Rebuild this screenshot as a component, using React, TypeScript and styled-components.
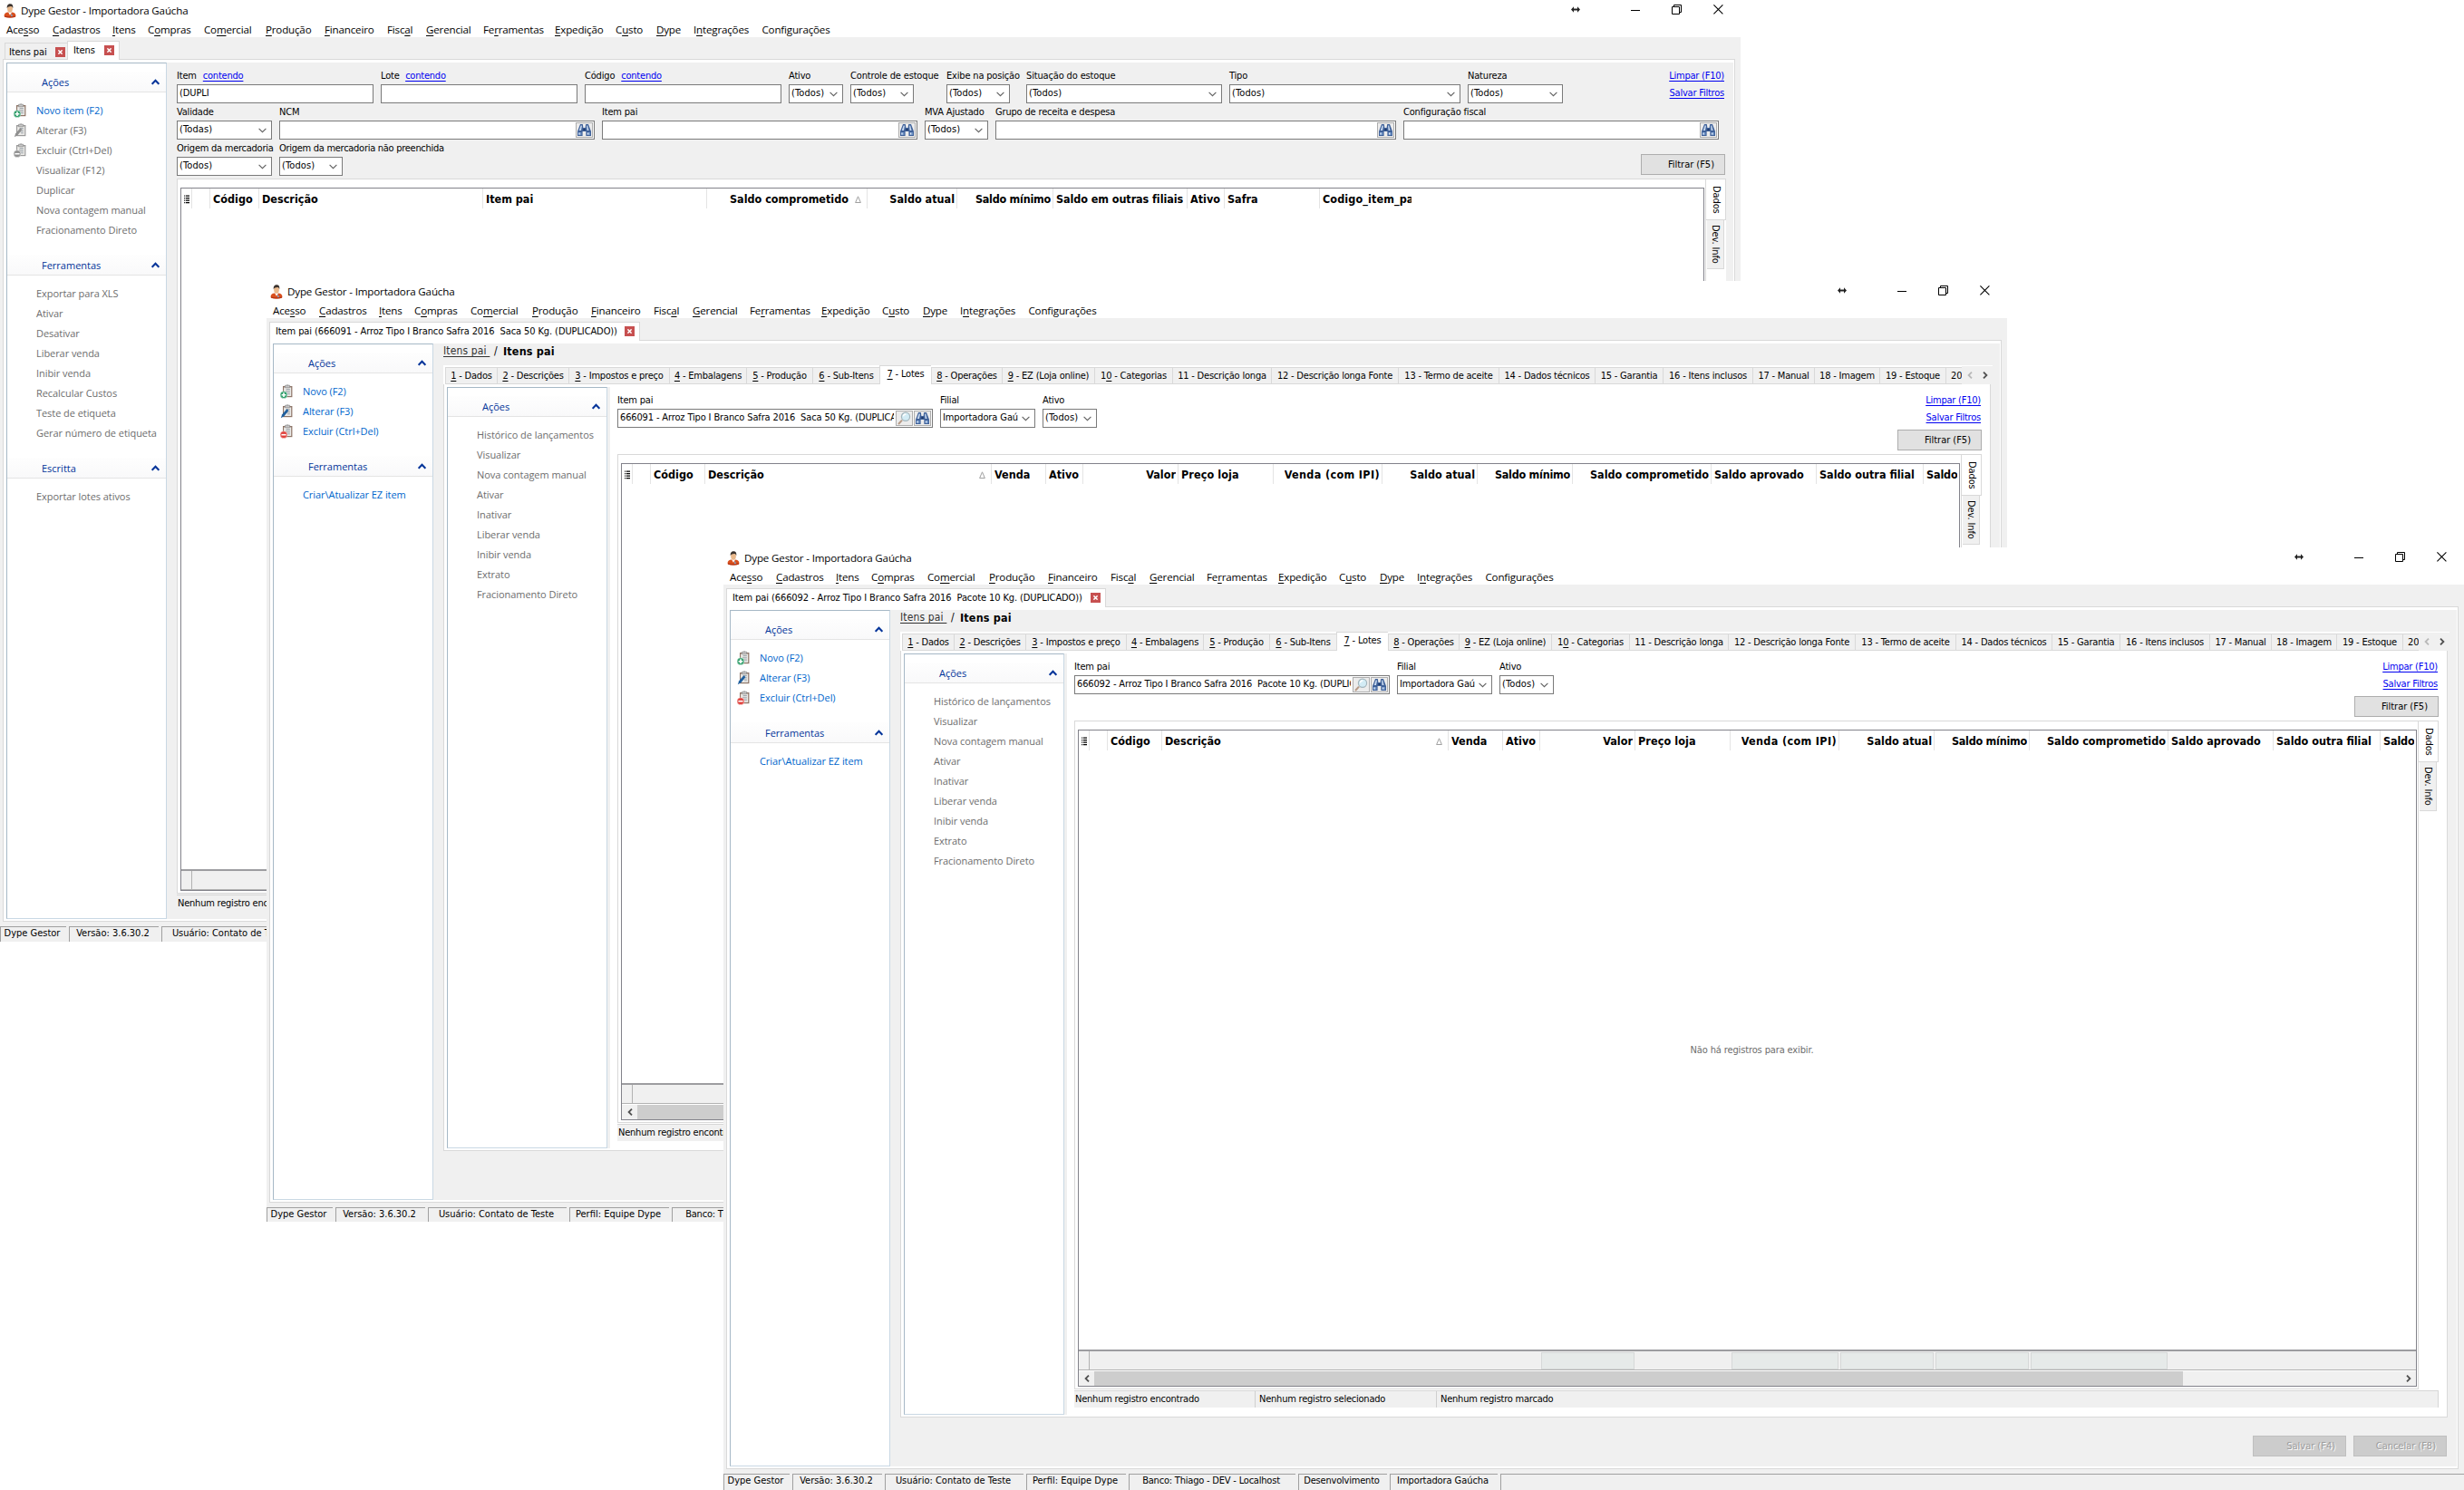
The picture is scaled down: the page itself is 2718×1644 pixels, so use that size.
import React from "react";
import styled, { createGlobalStyle, css } from "styled-components";

const TAHOMA = `"DejaVu Sans Condensed", "DejaVu Sans", sans-serif`;
const SEGOE = `"Open Sans", "Noto Sans", sans-serif`;
const FACE = "#f0f0f0";
const LINE = "#d9d9d9";

const GlobalStyle = createGlobalStyle`
  *, *::before, *::after { box-sizing: border-box; }
  html, body { margin: 0; padding: 0; background: #fff; }
  body { width: 2718px; height: 1644px; overflow: hidden; font: 11px/14px ${TAHOMA}; color: #000; }
`;

/* ---------- desktop and window frame ---------- */

const Desktop = styled.div`
  position: relative;
  width: 2718px;
  height: 1644px;
  overflow: hidden;
  background: #fff;
`;

const Frame = styled.section<{ $x: number; $y: number; $h: number }>`
  position: absolute;
  left: ${(p) => p.$x}px;
  top: ${(p) => p.$y}px;
  width: 1920px;
  height: ${(p) => p.$h}px;
  display: flex;
  flex-direction: column;
  overflow: hidden;
  background: ${FACE};
  white-space: pre;
`;

const TitleBar = styled.header`
  height: 24px;
  flex: none;
  display: flex;
  align-items: center;
  background: #fff;
  padding: 0 19px 0 4px;
  font: 11.6px/16px ${SEGOE};
  letter-spacing: -0.16px;
`;

const TitleText = styled.span`
  flex: 1;
  padding-left: 5px;
`;

const Caption = styled.div`
  display: flex;
  align-items: center;
  height: 20px;
  margin-bottom: 4px;
`;

const CaptionGlyph = styled.span<{ $gap: number }>`
  display: flex;
  width: 11px;
  margin-left: ${(p) => p.$gap}px;
`;

const MenuBar = styled.nav`
  height: 17px;
  flex: none;
  display: flex;
  align-items: center;
  background: #fff;
  padding-left: 7px;
  font: 11.6px/16px ${SEGOE};
  letter-spacing: -0.18px;
`;

const MenuEntry = styled.span<{ $w: number }>`
  width: ${(p) => p.$w}px;
`;

const Mnemonic = styled.span`
  text-decoration: underline;
  text-underline-offset: 1.5px;
  text-decoration-thickness: 1px;
  text-decoration-skip-ink: none;
`;

const DocTabs = styled.div`
  height: 24px;
  flex: none;
  display: flex;
  align-items: flex-end;
  padding-left: 3px;
`;

const DocTab = styled.div<{ $w: number; $active?: boolean }>`
  display: flex;
  align-items: center;
  width: ${(p) => p.$w}px;
  border: 1px solid ${LINE};
  border-bottom: 0;
  letter-spacing: -0.1px;
  ${(p) =>
    p.$active
      ? css`
          height: 21px;
          margin-bottom: -1px;
          padding: 0 5px 1px 6px;
          background: #fff;
          z-index: 1;
        `
      : css`
          height: 18px;
          margin-left: 2px;
          padding: 2px 2px 0 4px;
          border-right: 0;
          background: ${FACE};
        `}
`;

const CloseBox = styled.span`
  margin-left: auto;
  width: 11px;
  height: 11px;
  display: flex;
  align-items: center;
  justify-content: center;
  background: #c75050;
`;

const Page = styled.main`
  height: 952px;
  flex: none;
  display: flex;
  margin: 0 6px 0 3px;
  border: 1px solid ${LINE};
  background: #fff;
  padding: 3px 1px 2px 3px;
`;

const Content = styled.div`
  flex: 1;
  min-width: 0;
  display: flex;
  flex-direction: column;
  background: ${FACE};
`;

/* ---------- task side panel ---------- */

const Panel = styled.aside`
  width: 177px;
  flex: none;
  padding-top: 9px;
  background: #fff;
  border: 1px solid #a6b8c6;
  border-right-color: #c9d8e4;
  border-bottom-color: #c9d8e4;
`;

const GroupHead = styled.div`
  height: 23px;
  display: flex;
  align-items: center;
  justify-content: space-between;
  padding: 1px 7px 0 38px;
  background: linear-gradient(#fefefe, #f9f9fa);
  border-bottom: 1px solid #e4e4e4;
  color: #003399;
  font: 11px/14px ${SEGOE};
`;

const GroupList = styled.ul`
  list-style: none;
  margin: 0;
  padding: 9px 0 16px;
`;

const Task = styled.li<{ $on?: boolean }>`
  height: 22px;
  display: flex;
  align-items: center;
  padding-left: 7px;
  color: ${(p) => (p.$on ? "#0066cc" : "#6d6d6d")};
  font: 11px/14px ${SEGOE};
  letter-spacing: -0.06px;
`;

const TaskIcon = styled.span`
  width: 25px;
  flex: none;
  display: flex;
`;

/* ---------- filters ---------- */

const FilterRow = styled.div`
  display: flex;
  align-items: flex-start;
  gap: 8px;
  height: 37px;
  margin-bottom: 3px;
`;

const FilterBlock = styled.div`
  padding: 8px 9px 0 11px;
`;

const Field = styled.div<{ $w: number }>`
  width: ${(p) => p.$w}px;
  flex: none;
`;

const FieldLabel = styled.label<{ $ls?: number }>`
  display: block;
  height: 14px;
  margin-bottom: 2px;
  letter-spacing: ${(p) => p.$ls ?? -0.18}px;
`;

const Box = styled.div<{ $w: number }>`
  width: ${(p) => p.$w}px;
  height: 21px;
  display: flex;
  align-items: center;
  border: 1px solid #7a7a7a;
  background: #fff;
  padding: 0 1px 1px 2px;
`;

const BoxText = styled.span<{ $ls?: number }>`
  flex: 1;
  min-width: 0;
  overflow: hidden;
  letter-spacing: ${(p) => p.$ls ?? 0.1}px;
`;

const Arrow = styled.span`
  width: 17px;
  display: flex;
  justify-content: center;
  padding-top: 2px;
`;

const MiniButton = styled.span`
  width: 19px;
  height: 17px;
  flex: none;
  margin: 1px 0 0 1.5px;
  display: flex;
  align-items: center;
  justify-content: center;
  border: 1px solid #adadad;
  background: #ececec;
`;

const Link = styled.a<{ $ml?: number }>`
  margin-left: ${(p) => p.$ml ?? 0}px;
  color: #0000f0;
  text-decoration: underline;
  text-underline-offset: 1.5px;
  text-decoration-skip-ink: none;
  letter-spacing: -0.22px;
`;

const LinkStack = styled.div`
  margin-left: auto;
  display: flex;
  flex-direction: column;
  align-items: flex-end;
  gap: 5px;
  padding-right: 1px;
`;

const Button = styled.button<{ $w?: number; $off?: boolean }>`
  width: ${(p) => p.$w ?? 93}px;
  height: 23px;
  display: block;
  border: 1px solid ${(p) => (p.$off ? "#bfbfbf" : "#adadad")};
  background: ${(p) => (p.$off ? "#cccccc" : "#e1e1e1")};
  color: ${(p) => (p.$off ? "#9c9c9c" : "#000")};
  text-shadow: ${(p) => (p.$off ? "1px 1px 0 #fff" : "none")};
  font: 11px/14px ${TAHOMA};
  letter-spacing: -0.02px;
  text-align: right;
  padding: 1px 11px 0 0;
`;

/* ---------- data grid ---------- */

const GridArea = styled.div<{ $h: number }>`
  height: ${(p) => p.$h}px;
  flex: none;
  display: flex;
`;

const GridFrame = styled.div`
  flex: 1;
  min-width: 0;
  display: flex;
  padding: 9px 1px 2px 3px;
  border: 1px solid ${LINE};
  background: #fff;
`;

const Grid = styled.div`
  flex: 1;
  min-width: 0;
  display: flex;
  flex-direction: column;
  border: 1px solid #82828a;
  background: #fff;
`;

const HeadRow = styled.div`
  height: 22px;
  flex: none;
  display: flex;
  overflow: hidden;
`;

const HeadCell = styled.div<{ $w: number; $right?: boolean; $last?: boolean; $between?: boolean; $ls?: number }>`
  width: ${(p) => p.$w}px;
  flex: none;
  display: flex;
  align-items: center;
  justify-content: ${(p) => (p.$between ? "space-between" : p.$right ? "flex-end" : "flex-start")};
  overflow: hidden;
  padding: 1px 2px 0 3px;
  border-right: 1px solid ${(p) => (p.$last ? "#fff" : "#e4e4e4")};
  font: bold 12.5px/18px ${TAHOMA};
  letter-spacing: ${(p) => p.$ls ?? 0}px;
`;

const HeadText = styled.span`
  overflow: hidden;
`;

const SortMark = styled.span<{ $l: number }>`
  display: flex;
  margin: 0 4px 0 ${(p) => p.$l}px;
`;

const GridBody = styled.div`
  flex: 1;
  display: flex;
  align-items: center;
  justify-content: center;
  color: #6d6d6d;
  padding-left: 10px;
  letter-spacing: -0.13px;
`;

const FootRow = styled.div`
  height: 23px;
  flex: none;
  display: flex;
  overflow: hidden;
  border-top: 2px solid #9d9da0;
  border-bottom: 1px solid #b2b2b2;
  background: ${FACE};
`;

const FootCell = styled.div<{ $w: number; $grip?: boolean }>`
  width: ${(p) => p.$w}px;
  flex: none;
  padding: 1px 0 0 1px;
  border-right: 1px solid ${(p) => (p.$grip ? "#b2b2b2" : "transparent")};
`;

const SumBox = styled.div`
  height: 100%;
  border: 1px solid #d6d8d8;
  background: #e6eae9;
`;

const ScrollBar = styled.div`
  height: 17px;
  flex: none;
  display: flex;
  align-items: center;
  border-top: 1px solid #fff;
  background: ${FACE};
`;

const ScrollEnd = styled.span`
  width: 17px;
  display: flex;
  justify-content: center;
`;

const Thumb = styled.div`
  width: 1201px;
  height: 16px;
  background: #cdcdcd;
`;

const ScrollGap = styled.div`
  flex: 1;
`;

const SideTabs = styled.div`
  width: 22px;
  flex: none;
  display: flex;
  flex-direction: column;
  background: #fff;
`;

const SideTab = styled.div<{ $active?: boolean }>`
  writing-mode: vertical-rl;
  display: flex;
  align-items: center;
  justify-content: center;
  border: 1px solid ${LINE};
  border-left: 0;
  letter-spacing: -0.1px;
  ${(p) =>
    p.$active
      ? css`
          width: 22px;
          height: 46px;
          background: #fff;
        `
      : css`
          width: 19px;
          height: 54px;
          margin-left: 1px;
          border-top: 0;
          background: ${FACE};
        `}
`;

const RecordBar = styled.div<{ $h: number }>`
  height: ${(p) => p.$h}px;
  flex: none;
  display: flex;
  margin-top: 1px;
  border-top: 1px solid #d6d6d6;
  border-right: 1px solid #d6d6d6;
  background: ${FACE};
`;

const RecordCell = styled.span<{ $first?: boolean }>`
  width: ${(p) => (p.$first ? 199 : 200)}px;
  height: 18px;
  padding: 2px 0 0 ${(p) => (p.$first ? 1 : 4)}px;
  border-left: ${(p) => (p.$first ? 0 : 1)}px solid #cfcfcf;
  letter-spacing: -0.22px;
`;

/* ---------- parent item form ---------- */

const Form = styled.div`
  flex: 1;
  display: flex;
  flex-direction: column;
  padding-left: 11px;
`;

const Crumbs = styled.div`
  height: 24px;
  flex: none;
  display: flex;
  align-items: flex-start;
  font: 12px/17px ${TAHOMA};
  letter-spacing: 0.15px;
`;

const CrumbLink = styled.a`
  color: #333;
  text-decoration: underline;
  text-underline-offset: 1.5px;
  width: 53px;
`;

const CrumbSlash = styled.span`
  width: 13px;
  padding-left: 3px;
`;

const CrumbHere = styled.b`
  font-size: 12.5px;
`;

const FormTabs = styled.div`
  height: 21px;
  width: 1709px;
  flex: none;
  display: flex;
  align-items: flex-end;
  background: #fff;
`;

const FormTabsInner = styled.div`
  width: 1675px;
  height: 21px;
  flex: none;
  display: flex;
  align-items: flex-end;
  padding-left: 2px;
  border-left: 0;
  overflow: hidden;
`;

const FormTab = styled.div<{ $w: number; $active?: boolean }>`
  width: ${(p) => p.$w}px;
  flex: none;
  display: flex;
  justify-content: center;
  letter-spacing: -0.2px;
  border: 1px solid ${LINE};
  border-right: 0;
  ${(p) =>
    p.$active
      ? css`
          height: 21px;
          background: #fff;
          border-bottom: 0;
          padding-top: 2px;
        `
      : css`
          height: 19px;
          background: ${FACE};
          padding-top: 2px;
        `}
`;

const TabScroller = styled.div`
  flex: 1;
  height: 20px;
  display: flex;
  align-items: center;
  gap: 11px;
  padding-left: 6px;
  background: ${FACE};
`;

const FormPage = styled.div`
  width: 1707px;
  height: 846px;
  flex: none;
  display: flex;
  border: 1px solid ${LINE};
  border-top: 0;
  background: #fff;
  padding: 3px 0 2px 3px;
`;

const Splitter = styled.div`
  width: 3px;
  flex: none;
  background: ${FACE};
`;

const LotArea = styled.div`
  flex: 1;
  min-width: 0;
  padding: 8px 9px 0 8px;
`;

const LotFilters = styled.div`
  height: 66px;
  display: flex;
  align-items: flex-start;
  gap: 8px;
`;

const LotActions = styled.div`
  margin-left: auto;
  display: flex;
  flex-direction: column;
  align-items: flex-end;
  gap: 6px;
`;

const FormButtons = styled.div`
  display: flex;
  justify-content: flex-end;
  gap: 8px;
  padding: 20px 11px 0 0;
`;

/* ---------- status bar ---------- */

const StatusBar = styled.footer`
  height: 18px;
  flex: none;
  display: flex;
  gap: 3px;
  margin-top: 5px;
`;

const StatusCell = styled.span<{ $w: number; $fill?: boolean; $ls?: number }>`
  ${(p) => (p.$fill ? "flex: 1;" : `width: ${p.$w}px; flex: none;`)}
  display: flex;
  justify-content: center;
  padding: 0 3px 0 0;
  border-top: 1px solid #a0a0a0;
  border-left: 1px solid #a0a0a0;
  letter-spacing: ${(p) => p.$ls ?? 0}px;
`;

/* ---------- drawings ---------- */

const PersonIcon = () => (
  <svg width="14" height="16" viewBox="0 0 14 16">
    <path d="M0.6 14.2C0.4 11.4 1.6 10.2 4.4 9.6L9.4 9.6C12.4 10.2 13.6 11.4 13.4 14.2C11 15.8 3 15.8 0.6 14.2Z" fill="#d9501e" />
    <path d="M1 14.4C3.4 15.8 10.6 15.8 13 14.4V13.2C10 14.6 4 14.6 1 13.2Z" fill="#b43312" />
    <path d="M5 9.2L7 12.8L9.2 9.2Z" fill="#fff" />
    <path d="M8.6 10.5L10 14H8Z" fill="#7fa7d0" />
    <ellipse cx="7" cy="5.6" rx="2.9" ry="4.2" fill="#eab98c" />
    <path d="M3.8 5.2C3.4 1.6 5 0.2 7.2 0.2C9.6 0.2 10.8 1.8 10.2 5.2C9.8 3.6 9 3 7.8 3C6 3.2 4.6 3.2 3.8 5.2Z" fill="#3b332e" />
  </svg>
);

type Badge = "add" | "edit" | "remove";

const ClipIcon = ({ kind, off }: { kind: Badge; off?: boolean }) => {
  const board = off ? "#9a9a9a" : "#8d7466";
  const badge = off ? "#8f8f8f" : kind === "add" ? "#2f9e6a" : kind === "remove" ? "#e0413c" : "#1f5f9e";
  return (
    <svg width="14" height="16" viewBox="0 0 14 16">
      <path d="M3 2H13.4V14.2H3Z" fill={board} />
      <path d="M4.1 3.4H12.2V13H4.1Z" fill="#ecebe8" />
      <path d="M5.6 1.2H10.6V3.8H5.6Z" fill="#c9c9c9" stroke="#8a8a8a" strokeWidth="0.7" />
      <circle cx="8.1" cy="1.2" r="1" fill="#a8a8a8" />
      <path d="M6.6 5.5H10.9M6 7.3H10.9M7 9.1H10.9M8 10.9H10.9" stroke="#9aa2a8" strokeWidth="0.9" />
      {kind === "edit" ? (
        <path d="M0.8 15.2L2.2 11.2L7.4 5.2L9.4 7L4.4 13.2Z" fill={badge} />
      ) : (
        <>
          <circle cx="4" cy="11.7" r="3.9" fill={badge} stroke="#fff" strokeWidth="0.4" />
          <path d={kind === "add" ? "M4 9.3V14.1M1.6 11.7H6.4" : "M1.4 11.7H6.6"} stroke="#fff" strokeWidth="1.6" />
        </>
      )}
    </svg>
  );
};

const Binoculars = () => (
  <svg width="17" height="15" viewBox="0 0 17 15">
    <path d="M4 1H6.8L7.4 5H9.6L10.2 1H13L16 9V14H10.4V9H6.6V14H1V9Z" fill="#3f6199" />
    <path d="M4.6 2.4H6L5 8H2.8Z" fill="#c9daf0" />
    <path d="M11 2.4H12.2L13.6 8H11.6Z" fill="#c9daf0" />
    <path d="M2 10H5.4V13H2ZM11.6 10H15V13H11.6Z" fill="#6f93c6" />
    <path d="M2.4 10.4H3.6V12.6H2.4ZM12 10.4H13.2V12.6H12Z" fill="#e8f0fa" />
    <path d="M7.4 6H9.6V8H7.4Z" fill="#1f3a6b" />
  </svg>
);

const Magnifier = () => (
  <svg width="15" height="15" viewBox="0 0 15 15">
    <path d="M1 14L5 9.6" stroke="#b79a86" strokeWidth="2" />
    <circle cx="9" cy="5.8" r="4.6" fill="#d3ecf5" stroke="#a4b6bd" strokeWidth="1.2" />
    <path d="M6.4 5.4A2.8 2.8 0 0 1 9.4 3" stroke="#fff" strokeWidth="1.3" fill="none" />
  </svg>
);

const Chevron = () => (
  <svg width="9" height="6" viewBox="0 0 9 6">
    <path d="M0.6 0.8L4.5 4.7L8.4 0.8" fill="none" stroke="#606060" strokeWidth="1.1" />
  </svg>
);

const Collapse = () => (
  <svg width="9" height="7" viewBox="0 0 9 7">
    <path d="M0.7 5.8L4.5 1.8L8.3 5.8" fill="none" stroke="#003399" strokeWidth="2" />
  </svg>
);

const Angle = ({ left, color }: { left?: boolean; color: string }) => (
  <svg width="6" height="8" viewBox="0 0 6 8">
    <path d={left ? "M5 0.6L1.6 4L5 7.4" : "M1 0.6L4.4 4L1 7.4"} fill="none" stroke={color} strokeWidth="1.8" />
  </svg>
);

const Triangle = () => (
  <svg width="7" height="8" viewBox="0 0 7 8">
    <path d="M3.5 0.8L6.4 7.5H0.6Z" fill="#fff" stroke="#a0a0a0" strokeWidth="1" />
  </svg>
);

const Grip = () => (
  <svg width="7" height="11" viewBox="0 0 7 11">
    <path d="M2 1.5H7M2 4.5H7M2 7.5H7M2 10.3H7" stroke="#000" strokeWidth="1.4" />
    <path d="M0 1.5H1M0 4.5H1M0 7.5H1M0 10.3H1" stroke="#000" strokeWidth="1.4" />
  </svg>
);

const CloseGlyph = () => (
  <svg width="5" height="5" viewBox="0 0 5 5">
    <path d="M0.4 0.3L4.6 4.7M4.6 0.3L0.4 4.7" stroke="#fff" strokeWidth="1.4" />
  </svg>
);

const SpanGlyph = () => (
  <svg width="10" height="7" viewBox="0 0 10 7">
    <path d="M0 3.5L3 0.3V6.7ZM10 3.5L7 0.3V6.7Z" fill="#222" />
    <path d="M2 3.5H8" stroke="#222" strokeWidth="2" />
  </svg>
);

const MinGlyph = () => (
  <svg width="11" height="11" viewBox="0 0 11 11">
    <path d="M0 6.5H10" stroke="#000" />
  </svg>
);

const RestoreGlyph = () => (
  <svg width="11" height="11" viewBox="0 0 11 11">
    <path d="M0.5 2.5H8.5V10.5H0.5ZM2.5 2.5V0.5H10.5V8.5H8.5" fill="none" stroke="#000" />
  </svg>
);

const ExitGlyph = () => (
  <svg width="11" height="11" viewBox="0 0 11 11">
    <path d="M0.4 0.4L10.4 10.4M10.4 0.4L0.4 10.4" stroke="#000" strokeWidth="1.1" />
  </svg>
);

/* ---------- composed parts ---------- */

const Keyed = ({ text }: { text: string }) => {
  const at = text.indexOf("&");
  if (at < 0) return <>{text}</>;
  return (
    <>
      {text.slice(0, at)}
      <Mnemonic>{text[at + 1]}</Mnemonic>
      {text.slice(at + 2)}
    </>
  );
};

const MENU: [string, number][] = [
  ["Ace&sso", 51],
  ["&Cadastros", 66],
  ["&Itens", 39],
  ["C&ompras", 62],
  ["Co&mercial", 68],
  ["&Produção", 65],
  ["&Financeiro", 69],
  ["Fisc&al", 43],
  ["&Gerencial", 63],
  ["Fe&rramentas", 79],
  ["&Expedição", 67],
  ["C&usto", 45],
  ["&Dype", 41],
  ["I&ntegrações", 75.5],
  ["Configurações", 90],
];

const STATUS: [string, number, number?][] = [
  ["Dype Gestor", 73],
  ["Versão: 3.6.30.2", 99],
  ["Usuário: Contato de Teste", 153],
  ["Perfil: Equipe Dype", 110],
  ["Banco: Thiago - DEV - Localhost", 184, -0.2],
  ["Desenvolvimento", 98, -0.2],
  ["Importadora Gaúcha", 119, -0.08],
];

interface TabInfo {
  text: string;
  w: number;
  active?: boolean;
}

const AppWindow = ({
  x,
  y,
  h,
  tabs,
  children,
}: {
  x: number;
  y: number;
  h: number;
  tabs: TabInfo[];
  children: React.ReactNode;
}) => (
  <Frame $x={x} $y={y} $h={h}>
    <TitleBar>
      <PersonIcon />
      <TitleText>Dype Gestor - Importadora Gaúcha</TitleText>
      <Caption>
        <CaptionGlyph $gap={0}><SpanGlyph /></CaptionGlyph>
        <CaptionGlyph $gap={55}><MinGlyph /></CaptionGlyph>
        <CaptionGlyph $gap={34}><RestoreGlyph /></CaptionGlyph>
        <CaptionGlyph $gap={35}><ExitGlyph /></CaptionGlyph>
      </Caption>
    </TitleBar>
    <MenuBar>
      {MENU.map(([m, w]) => (
        <MenuEntry key={m} $w={w}><Keyed text={m} /></MenuEntry>
      ))}
    </MenuBar>
    <DocTabs>
      {tabs.map((t) => (
        <DocTab key={t.text} $w={t.w} $active={t.active}>
          {t.text}
          <CloseBox><CloseGlyph /></CloseBox>
        </DocTab>
      ))}
    </DocTabs>
    <Page>{children}</Page>
    <StatusBar>
      {STATUS.map(([s, w, ls]) => (
        <StatusCell key={s} $w={w} $ls={ls}>{s}</StatusCell>
      ))}
      <StatusCell $w={0} $fill />
    </StatusBar>
  </Frame>
);

interface TaskInfo {
  text: string;
  on?: boolean;
  icon?: Badge;
}
interface GroupInfo {
  title: string;
  tasks: TaskInfo[];
}

const TaskPanel = ({ groups }: { groups: GroupInfo[] }) => (
  <Panel>
    {groups.map((g) => (
      <React.Fragment key={g.title}>
        <GroupHead>
          {g.title}
          <Collapse />
        </GroupHead>
        <GroupList>
          {g.tasks.map((t) => (
            <Task key={t.text} $on={t.on}>
              <TaskIcon>{t.icon && <ClipIcon kind={t.icon} off={!t.on} />}</TaskIcon>
              {t.text}
            </Task>
          ))}
        </GroupList>
      </React.Fragment>
    ))}
  </Panel>
);

const off = (...names: string[]): TaskInfo[] => names.map((text) => ({ text }));

const ITEM_GROUPS: GroupInfo[] = [
  {
    title: "Ações",
    tasks: [
      { text: "Novo item (F2)", on: true, icon: "add" },
      { text: "Alterar (F3)", icon: "edit" },
      { text: "Excluir (Ctrl+Del)", icon: "remove" },
      ...off("Visualizar (F12)", "Duplicar", "Nova contagem manual", "Fracionamento Direto"),
    ],
  },
  {
    title: "Ferramentas",
    tasks: off(
      "Exportar para XLS",
      "Ativar",
      "Desativar",
      "Liberar venda",
      "Inibir venda",
      "Recalcular Custos",
      "Teste de etiqueta",
      "Gerar número de etiqueta"
    ),
  },
  { title: "Escritta", tasks: off("Exportar lotes ativos") },
];

const PARENT_GROUPS: GroupInfo[] = [
  {
    title: "Ações",
    tasks: [
      { text: "Novo (F2)", on: true, icon: "add" },
      { text: "Alterar (F3)", on: true, icon: "edit" },
      { text: "Excluir (Ctrl+Del)", on: true, icon: "remove" },
    ],
  },
  { title: "Ferramentas", tasks: [{ text: "Criar\\Atualizar EZ item", on: true }] },
];

const LOT_GROUPS: GroupInfo[] = [
  {
    title: "Ações",
    tasks: off(
      "Histórico de lançamentos",
      "Visualizar",
      "Nova contagem manual",
      "Ativar",
      "Inativar",
      "Liberar venda",
      "Inibir venda",
      "Extrato",
      "Fracionamento Direto"
    ),
  },
];

interface FieldInfo {
  label: string;
  w: number;
  cell?: number;
  value?: string;
  kind?: "text" | "select" | "lookup" | "lookup2";
  link?: number;
  ls?: number;
  vls?: number;
}

const FilterField = ({ f }: { f: FieldInfo }) => (
  <Field $w={f.cell ?? f.w}>
    <FieldLabel $ls={f.ls}>
      {f.label}
      {f.link !== undefined && <Link $ml={f.link}>contendo</Link>}
    </FieldLabel>
    <Box $w={f.w}>
      <BoxText $ls={f.vls}>{f.value ?? ""}</BoxText>
      {f.kind === "select" && <Arrow><Chevron /></Arrow>}
      {f.kind === "lookup2" && <MiniButton><Magnifier /></MiniButton>}
      {(f.kind === "lookup" || f.kind === "lookup2") && <MiniButton><Binoculars /></MiniButton>}
    </Box>
  </Field>
);

const todos = (label: string, w: number, extra: Partial<FieldInfo> = {}): FieldInfo => ({
  label,
  w,
  value: "(Todos)",
  kind: "select",
  ...extra,
});

const ROW1: FieldInfo[] = [
  { label: "Item", w: 217, value: "(DUPLI", link: 7, vls: -0.1 },
  { label: "Lote", w: 217, link: 6.5 },
  { label: "Código", w: 217, link: 7 },
  todos("Ativo", 60),
  todos("Controle de estoque", 70, { cell: 98, ls: -0.15 }),
  todos("Exibe na posição", 70, { cell: 80 }),
  todos("Situação do estoque", 216, { ls: -0.15 }),
  todos("Tipo", 255),
  todos("Natureza", 105),
];
const ROW2: FieldInfo[] = [
  { label: "Validade", w: 105, value: "(Todas)", kind: "select" },
  { label: "NCM", w: 348, kind: "lookup" },
  { label: "Item pai", w: 348, kind: "lookup" },
  todos("MVA Ajustado", 70),
  { label: "Grupo de receita e despesa", w: 442, kind: "lookup", ls: -0.17 },
  { label: "Configuração fiscal", w: 348, kind: "lookup" },
];
const ROW3: FieldInfo[] = [
  todos("Origem da mercadoria", 105, { ls: -0.25 }),
  todos("Origem da mercadoria não preenchida", 70, { ls: -0.28 }),
];

interface Column {
  label?: string;
  w: number;
  right?: boolean;
  sort?: "near" | "far";
  sum?: boolean;
  ls?: number;
}

const DataGrid = ({ columns, height, scroll, empty }: { columns: Column[]; height: number; scroll?: boolean; empty?: string }) => (
  <GridArea $h={height}>
    <GridFrame>
      <Grid>
        <HeadRow>
          <HeadCell $w={12}><Grip /></HeadCell>
          {columns.map((c, i) => (
            <HeadCell
              key={i}
              $w={c.w}
              $right={c.right}
              $between={c.sort === "far"}
              $last={i === columns.length - 1}
              $ls={c.ls}
            >
              <HeadText>{c.label}</HeadText>
              {c.sort && <SortMark $l={7}><Triangle /></SortMark>}
            </HeadCell>
          ))}
        </HeadRow>
        <GridBody>{empty}</GridBody>
        <FootRow>
          <FootCell $w={12} $grip />
          {columns.map((c, i) => (
            <FootCell key={i} $w={c.w}>{c.sum && <SumBox />}</FootCell>
          ))}
        </FootRow>
        {scroll && (
          <ScrollBar>
            <ScrollEnd><Angle left color="#505050" /></ScrollEnd>
            <Thumb />
            <ScrollGap />
            <ScrollEnd><Angle color="#505050" /></ScrollEnd>
          </ScrollBar>
        )}
      </Grid>
    </GridFrame>
    <SideTabs>
      <SideTab $active>Dados</SideTab>
      <SideTab>Dev. Info</SideTab>
    </SideTabs>
  </GridArea>
);

const ITEM_COLUMNS: Column[] = [
  { w: 20 },
  { label: "Código", w: 54 },
  { label: "Descrição", w: 247 },
  { label: "Item pai", w: 247 },
  { label: "Saldo comprometido", w: 177, right: true, sort: "near" },
  { label: "Saldo atual", w: 99, right: true },
  { label: "Saldo mínimo", w: 106, right: true, ls: -0.25 },
  { label: "Saldo em outras filiais", w: 148, ls: -0.08 },
  { label: "Ativo", w: 41 },
  { label: "Safra", w: 105 },
  { label: "Codigo_item_pai", w: 104, ls: 0.1 },
];

const LOT_COLUMNS: Column[] = [
  { w: 20 },
  { label: "Código", w: 60 },
  { label: "Descrição", w: 316, sort: "far" },
  { label: "Venda", w: 60 },
  { label: "Ativo", w: 41 },
  { label: "Valor", w: 105, right: true, sum: true },
  { label: "Preço loja", w: 105, ls: 0.1 },
  { label: "Venda (com IPI)", w: 120, right: true, sum: true, ls: 0.35 },
  { label: "Saldo atual", w: 105, right: true, sum: true },
  { label: "Saldo mínimo", w: 105, right: true, sum: true, ls: -0.25 },
  { label: "Saldo comprometido", w: 153, right: true, sum: true },
  { label: "Saldo aprovado", w: 116 },
  { label: "Saldo outra filial", w: 118 },
  { label: "Saldo", w: 40, ls: -0.15 },
];

const FORM_TABS: [string, number][] = [
  ["&1 - Dados", 57],
  ["&2 - Descrições", 79],
  ["&3 - Impostos e preço", 111],
  ["&4 - Embalagens", 85],
  ["&5 - Produção", 73],
  ["&6 - Sub-Itens", 74],
  ["&7 - Lotes", 57],
  ["&8 - Operações", 78],
  ["&9 - EZ (Loja online)", 102],
  ["1&0 - Categorias", 86],
  ["11 - Descrição longa", 109],
  ["12 - Descrição longa Fonte", 140],
  ["13 - Termo de aceite", 111],
  ["14 - Dados técnicos", 106],
  ["15 - Garantia", 75],
  ["16 - Itens inclusos", 99],
  ["17 - Manual", 68],
  ["18 - Imagem", 72],
  ["19 - Estoque", 73],
  ["20 - Fotos", 58],
];

const FilterLinks = () => (
  <LinkStack>
    <Link>Limpar (F10)</Link>
    <Link>Salvar Filtros</Link>
  </LinkStack>
);

const GridBlock = styled.div`
  padding: 0 8px 0 11px;
`;

const RowButton = styled.div`
  margin: 13px 0 0 auto;
`;

const ItemsView = () => (
  <>
    <TaskPanel groups={ITEM_GROUPS} />
    <Content>
      <FilterBlock>
        <FilterRow>
          {ROW1.map((f) => <FilterField key={f.label} f={f} />)}
          <FilterLinks />
        </FilterRow>
        <FilterRow>{ROW2.map((f) => <FilterField key={f.label} f={f} />)}</FilterRow>
        <FilterRow>
          {ROW3.map((f) => <FilterField key={f.label} f={f} />)}
          <RowButton><Button>Filtrar (F5)</Button></RowButton>
        </FilterRow>
      </FilterBlock>
      <GridBlock>
        <DataGrid columns={ITEM_COLUMNS} height={789} />
        <RecordBar $h={24}>
          <RecordCell $first>Nenhum registro encontrado</RecordCell>
        </RecordBar>
      </GridBlock>
    </Content>
  </>
);

const ParentItemView = ({ item }: { item: string }) => (
  <>
    <TaskPanel groups={PARENT_GROUPS} />
    <Content>
      <Form>
        <Crumbs>
          <CrumbLink>{"Itens pai "}</CrumbLink>
          <CrumbSlash>/</CrumbSlash>
          <CrumbHere>Itens pai</CrumbHere>
        </Crumbs>
        <FormTabs>
          <FormTabsInner>
            {FORM_TABS.map(([t, w], i) => (
              <FormTab key={t} $w={w} $active={i === 6}>
                <span><Keyed text={t} /></span>
              </FormTab>
            ))}
          </FormTabsInner>
          <TabScroller>
            <Angle left color="#b8b8b8" />
            <Angle color="#505050" />
          </TabScroller>
        </FormTabs>
        <FormPage>
          <TaskPanel groups={LOT_GROUPS} />
          <Splitter />
          <LotArea>
            <LotFilters>
              <FilterField f={{ label: "Item pai", w: 348, value: item, kind: "lookup2", vls: -0.14 }} />
              <FilterField f={{ label: "Filial", w: 105, value: "Importadora Gaúcha", kind: "select", vls: -0.1 }} />
              <FilterField f={todos("Ativo", 60)} />
              <LotActions>
                <FilterLinks />
                <Button>Filtrar (F5)</Button>
              </LotActions>
            </LotFilters>
            <DataGrid columns={LOT_COLUMNS} height={738} scroll empty="Não há registros para exibir." />
            <RecordBar $h={19}>
              <RecordCell $first>Nenhum registro encontrado</RecordCell>
              <RecordCell>Nenhum registro selecionado</RecordCell>
              <RecordCell>Nenhum registro marcado</RecordCell>
            </RecordBar>
          </LotArea>
        </FormPage>
        <FormButtons>
          <Button $w={103} $off>Salvar (F4)</Button>
          <Button $w={103} $off>Cancelar (F8)</Button>
        </FormButtons>
      </Form>
    </Content>
  </>
);

export default function App() {
  return (
    <Desktop>
      <GlobalStyle />
      <AppWindow x={0} y={0} h={1039} tabs={[{ text: "Itens pai", w: 69 }, { text: "Itens", w: 58, active: true }]}>
        <ItemsView />
      </AppWindow>
      <AppWindow
        x={294}
        y={310}
        h={1038}
        tabs={[{ text: "Item pai (666091 - Arroz Tipo I Branco Safra 2016  Saca 50 Kg. (DUPLICADO))", w: 409, active: true }]}
      >
        <ParentItemView item="666091 - Arroz Tipo I Branco Safra 2016  Saca 50 Kg. (DUPLICADO)" />
      </AppWindow>
      <AppWindow
        x={798}
        y={604}
        h={1040}
        tabs={[{ text: "Item pai (666092 - Arroz Tipo I Branco Safra 2016  Pacote 10 Kg. (DUPLICADO))", w: 419, active: true }]}
      >
        <ParentItemView item="666092 - Arroz Tipo I Branco Safra 2016  Pacote 10 Kg. (DUPLICADO)" />
      </AppWindow>
    </Desktop>
  );
}
